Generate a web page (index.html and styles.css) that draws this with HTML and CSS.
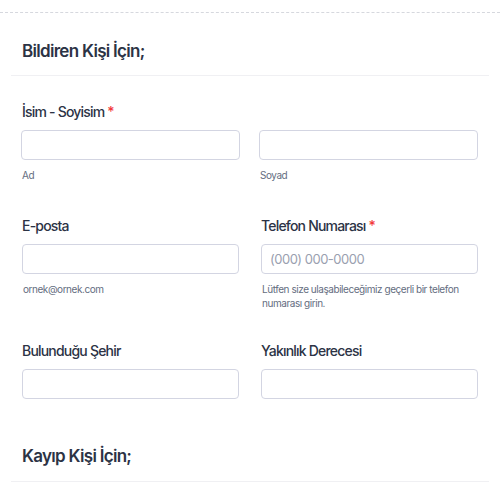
FILE: index.html
```html
<!DOCTYPE html>
<html lang="tr">
<head>
<meta charset="utf-8">
<title>Form</title>
<link rel="stylesheet" href="styles.css">
</head>
<body>
<div class="form">
  <div class="topline"></div>

  <div class="section-head">
    <h2 class="heading">Bildiren Kişi İçin;</h2>
    <div class="divider"></div>
  </div>

  <div class="row row-name">
    <div class="field">
      <label class="label">İsim - Soyisim <span class="req">*</span></label>
      <div class="input"></div>
      <div class="sublabel">Ad</div>
    </div>
    <div class="field">
      <label class="label label-empty">&nbsp;</label>
      <div class="input"></div>
      <div class="sublabel">Soyad</div>
    </div>
  </div>

  <div class="row row-half row-2">
    <div class="field">
      <label class="label">E-posta</label>
      <div class="input"></div>
      <div class="sublabel">ornek@ornek.com</div>
    </div>
    <div class="field">
      <label class="label">Telefon Numarası <span class="req">*</span></label>
      <div class="input"><span class="placeholder">(000) 000-0000</span></div>
      <div class="sublabel">Lütfen size ulaşabileceğimiz geçerli bir telefon numarası girin.</div>
    </div>
  </div>

  <div class="row row-half row-3">
    <div class="field">
      <label class="label">Bulunduğu Şehir</label>
      <div class="input"></div>
    </div>
    <div class="field">
      <label class="label">Yakınlık Derecesi</label>
      <div class="input"></div>
    </div>
  </div>

  <div class="section-head section-head-2">
    <h2 class="heading">Kayıp Kişi İçin;</h2>
    <div class="divider"></div>
  </div>
</div>
</body>
</html>
```

FILE: styles.css
```css
html, body {
  margin: 0;
  padding: 0;
  background: #ffffff;
}

body {
  font-family: Inter, "Noto Sans", "Liberation Sans", sans-serif;
  color: #2c3345;
  width: 500px;
  height: 484px;
  overflow: hidden;
}

.topline {
  height: 12px;
  border-bottom: 1px dashed #d6d8de;
}

.section-head {
  padding-top: 27px;
}

.heading {
  margin: 0 0 0 22px;
  font-size: 17px;
  line-height: 22px;
  font-weight: 600;
  letter-spacing: -0.7px;
  color: #2c3345;
}

.divider {
  margin: 13px 11px 0 11px;
  height: 1px;
  background: #f0f0f3;
}

.row {
  display: grid;
  grid-template-columns: 1fr 1fr;
  padding: 0 22px 0 21px;
}

.row-name {
  column-gap: 19px;
  margin-top: 26px;
}

.row-half {
  column-gap: 22px;
  padding-left: 22px;
}

.row-2 {
  margin-top: 34px;
}

.row-3 {
  margin-top: 31px;
}

.field {
  display: flex;
  flex-direction: column;
  min-width: 0;
}

.label {
  display: block;
  font-size: 14px;
  line-height: 20px;
  font-weight: 500;
  letter-spacing: -0.8px;
  color: #2c3345;
  margin-bottom: 8px;
}

.row-name .field:first-child .label {
  padding-left: 1px;
}

.req {
  color: #f23a3c;
}

.input {
  box-sizing: border-box;
  height: 30px;
  border: 1px solid #d3d5e2;
  border-radius: 4px;
  background: #ffffff;
  display: flex;
  align-items: center;
  padding: 0 8px;
}

.placeholder {
  font-size: 13px;
  letter-spacing: -0.5px;
  color: #9aa0af;
}

.sublabel {
  margin-top: 8px;
  font-size: 10px;
  line-height: 14px;
  letter-spacing: -0.45px;
  color: #646d80;
  padding-left: 1px;
}

.section-head-2 {
  padding-top: 46px;
}

.section-head-2 .divider {
  margin-top: 14px;
}
```
